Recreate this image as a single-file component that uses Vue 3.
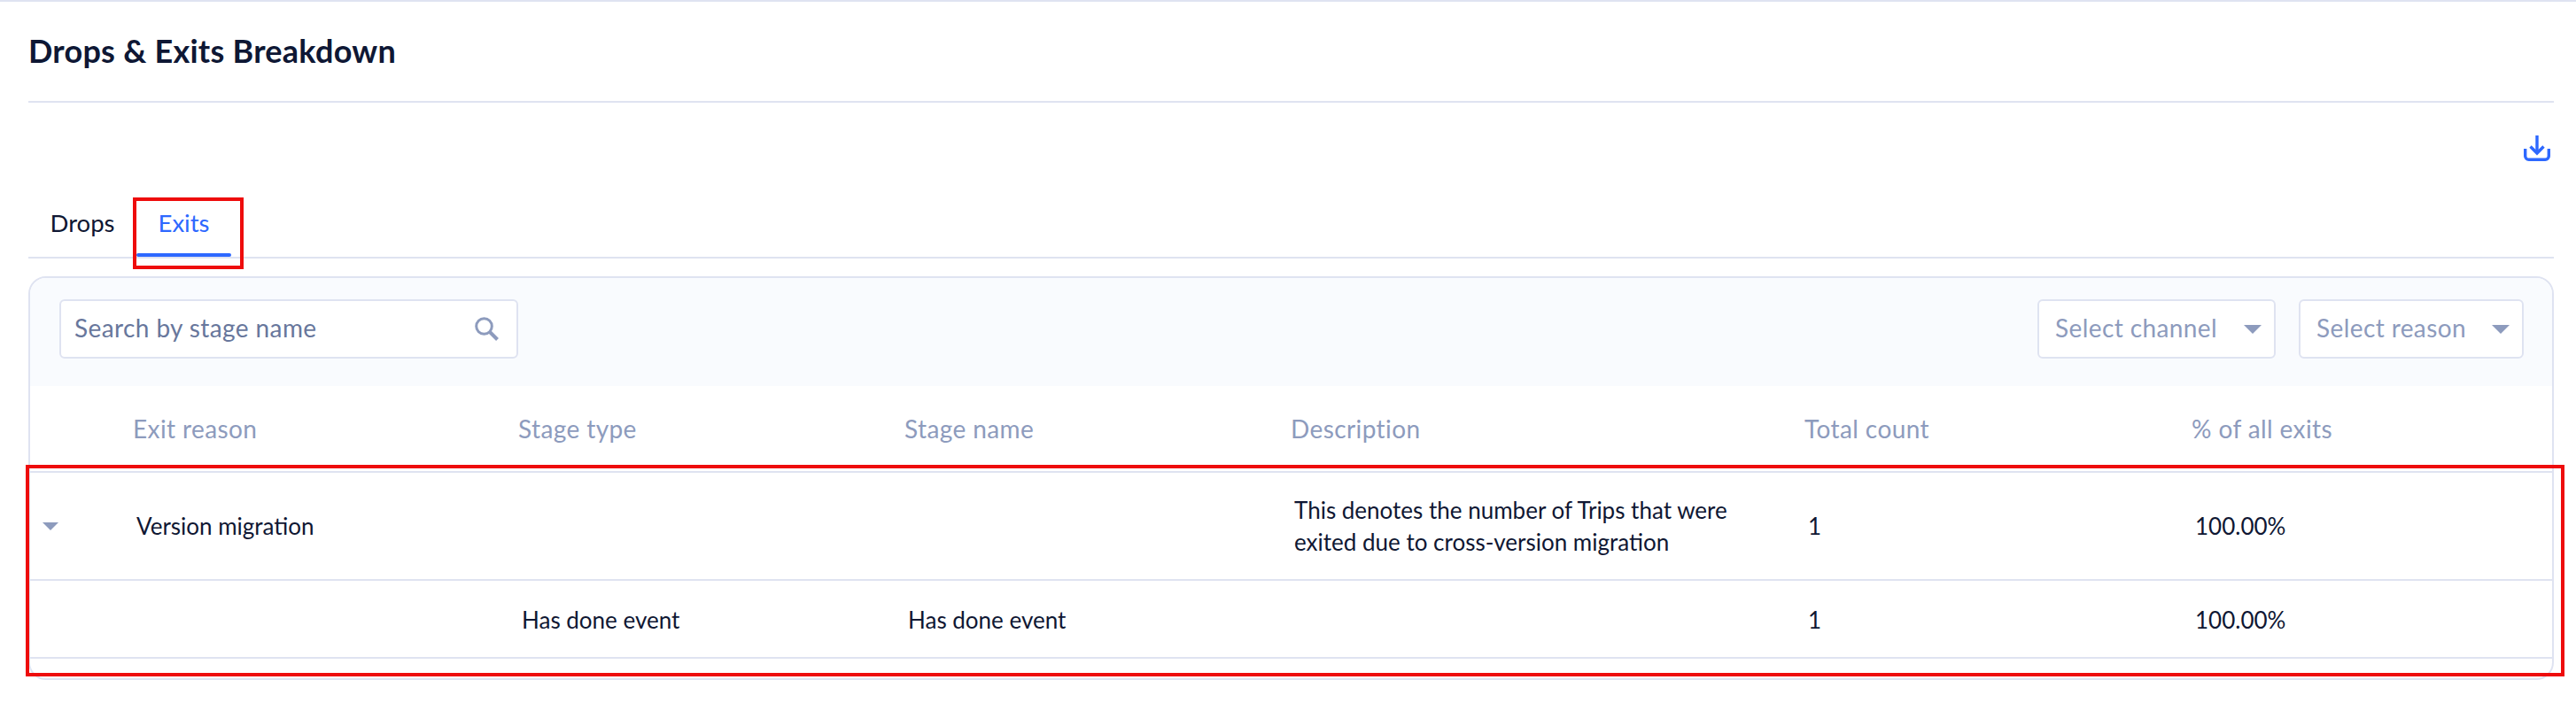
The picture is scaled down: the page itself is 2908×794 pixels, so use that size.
<template>
  <div class="page">
    <header class="title-bar">
      <h1>Drops &amp; Exits Breakdown</h1>
    </header>

    <div class="actions">
      <svg class="download" viewBox="0 0 30 29" fill="none" stroke="#2d68ff" stroke-width="3.400">
        <path d="M15 0v20" />
        <path d="M7.500 12.500L15 20l7.500-7.500" />
        <path d="M1.700 15v8.300a4 4 0 0 0 4 4h18.600a4 4 0 0 0 4-4V15" />
      </svg>
    </div>

    <nav class="tabs">
      <a class="tab">Drops</a>
      <a class="tab active">Exits</a>
    </nav>

    <section class="card">
      <div class="toolbar">
        <div class="search">
          <span>Search by stage name</span>
          <svg class="search-icon" viewBox="0 0 27 27" fill="none" stroke="#8d9bbd">
            <circle cx="10.500" cy="10.500" r="8.800" stroke-width="3" />
            <path d="M17 17l8.500 8.500" stroke-width="4" />
          </svg>
        </div>
        <div class="filters">
          <div class="select channel">
            <span>Select channel</span>
            <i class="caret"></i>
          </div>
          <div class="select reason">
            <span>Select reason</span>
            <i class="caret"></i>
          </div>
        </div>
      </div>

      <div class="row head">
        <div></div>
        <div v-for="h in headers" :key="h">{{ h }}</div>
      </div>

      <div v-for="(r, i) in rows" :key="i" class="row body" :class="r.cls">
        <div><i v-if="r.open" class="caret small"></i></div>
        <div>{{ r.reason }}</div>
        <div>{{ r.type }}</div>
        <div>{{ r.name }}</div>
        <div class="desc">{{ r.desc }}</div>
        <div>{{ r.count }}</div>
        <div>{{ r.pct }}</div>
      </div>
    </section>

    <div class="mark mark-tab"></div>
    <div class="mark mark-rows"></div>
  </div>
</template>

<script setup>
const headers = ['Exit reason', 'Stage type', 'Stage name', 'Description', 'Total count', '% of all exits']

const rows = [
  {
    cls: 'parent',
    open: true,
    reason: 'Version migration',
    type: '',
    name: '',
    desc: 'This denotes the number of Trips that were exited due to cross-version migration',
    count: '1',
    pct: '100.00%',
  },
  {
    cls: 'child',
    open: false,
    reason: '',
    type: 'Has done event',
    name: 'Has done event',
    desc: '',
    count: '1',
    pct: '100.00%',
  },
]
</script>

<style>
html,
body {
  margin: 0;
  background: #fff;
}
</style>

<style scoped>
.page {
  position: relative;
  width: 2908px;
  height: 794px;
  box-sizing: border-box;
  border-top: 2px solid #dfe3f1;
  padding: 0 25px 0 32px;
  background: #fff;
  font-family: Lato, "Open Sans", sans-serif;
  font-size: 26px;
  color: #0f1733;
  overflow: hidden;
}

.title-bar {
  height: 114px;
  box-sizing: border-box;
  border-bottom: 2px solid #dfe3f1;
  padding-top: 35px;
}

h1 {
  margin: 0;
  font-size: 36px;
  line-height: 40px;
  font-weight: 700;
  letter-spacing: 0.25px;
  color: #0e1734;
}

.actions {
  display: flex;
  justify-content: flex-end;
  box-sizing: border-box;
  padding: 37px 4px 0 0;
  height: 80px;
}

.download {
  width: 30px;
  height: 29px;
}

.tabs {
  display: flex;
  height: 68px;
  box-sizing: border-box;
  border-bottom: 2px solid #dfe3f1;
  margin-top: 28px;
}

.tab {
  padding: 8px 24.500px 0;
  height: 66px;
  box-sizing: border-box;
  line-height: 40px;
  font-size: 27.500px;
}

.tab.active {
  color: #2d68ff;
  position: relative;
}

.tab.active::after {
  content: "";
  position: absolute;
  left: 0;
  right: 0;
  bottom: 0;
  height: 4px;
  border-radius: 2px;
  background: #2d68ff;
}

.card {
  margin-top: 20px;
  height: 456px;
  box-sizing: border-box;
  border: 2px solid #dfe3f1;
  border-radius: 20px;
  overflow: hidden;
}

.toolbar {
  display: flex;
  justify-content: space-between;
  padding: 24px 32px 31px 33px;
  background: #f9fbfe;
}

.search,
.select {
  display: flex;
  align-items: center;
  justify-content: space-between;
  height: 67px;
  box-sizing: border-box;
  border: 2px solid #dfe3f1;
  border-radius: 6px;
  background: #fff;
  color: #8d9bbd;
  font-size: 28px;
  letter-spacing: 0.4px;
}

.search span,
.select span {
  margin-bottom: 3px;
}

.search {
  width: 518px;
  padding: 0 20px 0 15px;
  color: #68779c;
}

.search-icon {
  width: 27px;
  height: 27px;
}

.filters {
  display: flex;
  gap: 26px;
}

.select {
  padding: 0 14px 0 18px;
}

.channel {
  width: 269px;
}

.reason {
  width: 254px;
}

.caret {
  display: block;
  width: 0;
  height: 0;
  border-left: 10px solid transparent;
  border-right: 10px solid transparent;
  border-top: 10px solid #8d9bbd;
}

.caret.small {
  margin: 0 0 0 14px;
  border-left-width: 9px;
  border-right-width: 9px;
  border-top-width: 9px;
}

.row {
  display: grid;
  grid-template-columns: 116px 435px 436px 436px 580px 437px 1fr;
  align-items: center;
  box-sizing: border-box;
  border-bottom: 2px solid #dfe3f1;
}

.head {
  height: 98px;
  color: #8d9bbd;
  font-size: 28px;
  letter-spacing: 0.4px;
}

.body > div {
  padding-left: 4px;
}

.body > div:first-child {
  padding-left: 0;
}

.parent {
  height: 122px;
}

.child {
  height: 88px;
  padding-top: 2px;
}

.desc {
  width: 510px;
  line-height: 36px;
}

.mark {
  position: absolute;
  box-sizing: border-box;
  border: 4px solid #ee0c0c;
  pointer-events: none;
}

.mark-tab {
  left: 150px;
  top: 221px;
  width: 125px;
  height: 81px;
}

.mark-rows {
  left: 29px;
  top: 523px;
  width: 2866px;
  height: 239px;
}
</style>
